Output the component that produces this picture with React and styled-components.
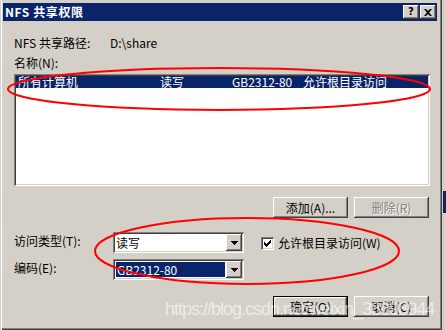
import React from 'react';
import styled, { createGlobalStyle, css } from 'styled-components';

const GlobalStyle = createGlobalStyle`
  html, body { margin: 0; padding: 0; }
  body {
    background: #D4D0C8;
    font-family: "Noto Sans CJK SC", "Liberation Sans", sans-serif;
    font-size: 12px;
  }
`;

const raised = css`
  background: #D4D0C8;
  box-shadow: inset -1px -1px #404040, inset 1px 1px #ffffff,
    inset -2px -2px #808080, inset 2px 2px #D4D0C8;
`;

const sunken = css`
  box-shadow: inset 1px 1px #808080, inset -1px -1px #ffffff,
    inset 2px 2px #404040, inset -2px -2px #D4D0C8;
`;

const Screen = styled.div`
  position: relative;
  width: 446px;
  height: 330px;
  overflow: hidden;
  display: flex;
  background: #D4D0C8;
`;

const Window = styled.div`
  width: 442px;
  height: 330px;
  box-sizing: border-box;
  padding: 3px 5px 0 3px;
  background: #D4D0C8;
  display: flex;
  flex-direction: column;
  box-shadow: inset 1px 0 #D4D0C8, inset 2px 0 #ffffff,
    inset -1px -1px #404040, inset -2px -2px #808080;
`;

const SideStrip = styled.div`
  flex: 1;
  display: flex;
  flex-direction: column;
  background: #D4D0C8;
`;

const SideBlue = styled.div`
  margin-top: 191px;
  margin-left: 1px;
  height: 22px;
  background: #0A246A;
`;

const TitleBar = styled.div`
  height: 18px;
  background: #0A246A;
  display: flex;
  align-items: center;
  padding: 0 1px 0 2px;
  gap: 1px;
`;

const TitleText = styled.div`
  flex: 1;
  color: #ffffff;
  font-weight: bold;
  font-size: 12px;
  line-height: 12px;
  letter-spacing: 0.6px;
`;

const CaptionButton = styled.div`
  ${raised};
  width: 16px;
  height: 14px;
  display: flex;
  align-items: center;
  justify-content: center;
  font-family: "DejaVu Sans", sans-serif;
  font-weight: bold;
  font-size: 10px;
  line-height: 10px;
  color: #000;
`;

const Body = styled.div`
  flex: 1;
  display: flex;
  flex-direction: column;
  padding: 16px 7px 0 11px;
`;

const InfoRow = styled.div`
  display: flex;
  height: 12px;
  line-height: 12px;
  margin-top: ${(p) => p.$top || 0}px;
`;

const InfoLabel = styled.span`
  width: ${(p) => p.$width || 'auto'};
  color: #000;
`;

const ListBox = styled.div`
  ${sunken};
  margin-top: 5px;
  height: 112px;
  box-sizing: border-box;
  padding: 2px;
  background: #ffffff;
`;

const ListRow = styled.div`
  display: grid;
  grid-template-columns: 142px 72px 71px 1fr;
  height: 12px;
  line-height: 12px;
  padding-left: 2px;
  background: ${(p) => (p.$selected ? '#0A246A' : 'transparent')};
  color: ${(p) => (p.$selected ? '#ffffff' : '#000000')};
  white-space: nowrap;
`;

const ButtonRow = styled.div`
  display: flex;
  justify-content: flex-end;
  gap: 6px;
  padding-right: 1px;
  margin-top: ${(p) => p.$top}px;
`;

const Button = styled.div`
  ${raised};
  width: 75px;
  height: 21px;
  box-sizing: border-box;
  display: flex;
  align-items: center;
  justify-content: center;
  font-size: 12px;
  line-height: 12px;
  color: ${(p) => (p.$disabled ? '#808080' : '#000000')};
  text-shadow: ${(p) => (p.$disabled ? '1px 1px #ffffff' : 'none')};
  ${(p) =>
    p.$default &&
    css`
      border: 1px solid #000000;
      box-shadow: inset -1px -1px #404040, inset 1px 1px #ffffff,
        inset -2px -2px #808080;
    `}
`;

const FieldGrid = styled.div`
  display: grid;
  grid-template-columns: 99px 131px auto;
  row-gap: 6px;
  align-items: center;
  margin-top: 14px;
`;

const FieldLabel = styled.span`
  line-height: 12px;
  margin-top: -3px;
  color: #000;
`;

const Combo = styled.div`
  ${sunken};
  width: 131px;
  height: 21px;
  box-sizing: border-box;
  padding: 2px;
  background: #ffffff;
  display: flex;
`;

const ComboText = styled.div`
  flex: 1;
  margin: 1px 1px 1px 1px;
  padding-left: ${(p) => (p.$selected ? 1 : 0)}px;
  line-height: 15px;
  font-size: 12px;
  background: ${(p) => (p.$selected ? '#0A246A' : 'transparent')};
  color: ${(p) => (p.$selected ? '#ffffff' : '#000000')};
`;

const ComboButton = styled.div`
  ${raised};
  width: 16px;
  height: 17px;
  display: flex;
  align-items: center;
  justify-content: center;
`;

const CheckField = styled.div`
  display: flex;
  align-items: center;
  gap: 4px;
  margin-left: 17px;
  margin-top: 1px;
  line-height: 12px;
`;

const CheckBox = styled.div`
  ${sunken};
  width: 13px;
  height: 13px;
  background: #ffffff;
  display: flex;
  align-items: center;
  justify-content: center;
`;

const Overlay = styled.svg`
  position: absolute;
  left: 0;
  top: 0;
  pointer-events: none;
`;

const Watermark = styled.div`
  position: absolute;
  left: 165px;
  top: 300px;
  font-family: "Liberation Sans", Arial, sans-serif;
  font-size: 18px;
  line-height: 18px;
  letter-spacing: -1px;
  color: rgba(255, 255, 255, 0.6);
  white-space: nowrap;
  pointer-events: none;
`;

const Arrow = () => (
  <svg width="7" height="4" viewBox="0 0 7 4">
    <path d="M0 0H7V1H6V2H5V3H4V4H3V3H2V2H1V1H0Z" fill="#000" />
  </svg>
);

const CloseGlyph = () => (
  <svg width="8" height="7" viewBox="0 0 8 7">
    <path d="M0 0H2L4 2L6 0H8L5 3.5L8 7H6L4 5L2 7H0L3 3.5Z" fill="#000" />
  </svg>
);

const Check = () => (
  <svg width="7" height="7" viewBox="0 0 7 7">
    <path d="M0 2H1V3H2V4H3V3H4V2H5V1H6V0H7V3H6V4H5V5H4V6H3V7H2V6H1V5H0Z" fill="#000" />
  </svg>
);

const Combobox = ({ value, selected }) => (
  <Combo>
    <ComboText $selected={selected}>{value}</ComboText>
    <ComboButton>
      <Arrow />
    </ComboButton>
  </Combo>
);

export default function App() {
  return (
    <>
      <GlobalStyle />
      <Screen>
        <Window>
          <TitleBar>
            <TitleText>NFS 共享权限</TitleText>
            <CaptionButton>?</CaptionButton>
            <CaptionButton>
              <CloseGlyph />
            </CaptionButton>
          </TitleBar>
          <Body>
            <InfoRow>
              <InfoLabel $width="96px">NFS 共享路径:</InfoLabel>
              <InfoLabel>D:\share</InfoLabel>
            </InfoRow>
            <InfoRow $top={8}>
              <InfoLabel>名称(N):</InfoLabel>
            </InfoRow>
            <ListBox>
              <ListRow $selected>
                <span>所有计算机</span>
                <span>读写</span>
                <span>GB2312-80</span>
                <span>允许根目录访问</span>
              </ListRow>
            </ListBox>
            <ButtonRow $top={11}>
              <Button>添加(A)...</Button>
              <Button $disabled>删除(R)</Button>
            </ButtonRow>
            <FieldGrid>
              <FieldLabel>访问类型(T):</FieldLabel>
              <Combobox value="读写" />
              <CheckField>
                <CheckBox>
                  <Check />
                </CheckBox>
                <span>允许根目录访问(W)</span>
              </CheckField>
              <FieldLabel>编码(E):</FieldLabel>
              <Combobox value="GB2312-80" selected />
              <span />
            </FieldGrid>
            <ButtonRow $top={16}>
              <Button $default>确定(O)</Button>
              <Button>取消(C)</Button>
            </ButtonRow>
          </Body>
        </Window>
        <SideStrip>
          <SideBlue />
        </SideStrip>
        <Watermark>https://blog.csdn.net/weixin_38098944</Watermark>
        <Overlay width="446" height="330" viewBox="0 0 446 330">
          <ellipse cx="219" cy="89" rx="211" ry="21" fill="none" stroke="#ff0000" strokeWidth="2" />
          <ellipse cx="247" cy="251" rx="152" ry="33" fill="none" stroke="#ff0000" strokeWidth="2" />
        </Overlay>
      </Screen>
    </>
  );
}
